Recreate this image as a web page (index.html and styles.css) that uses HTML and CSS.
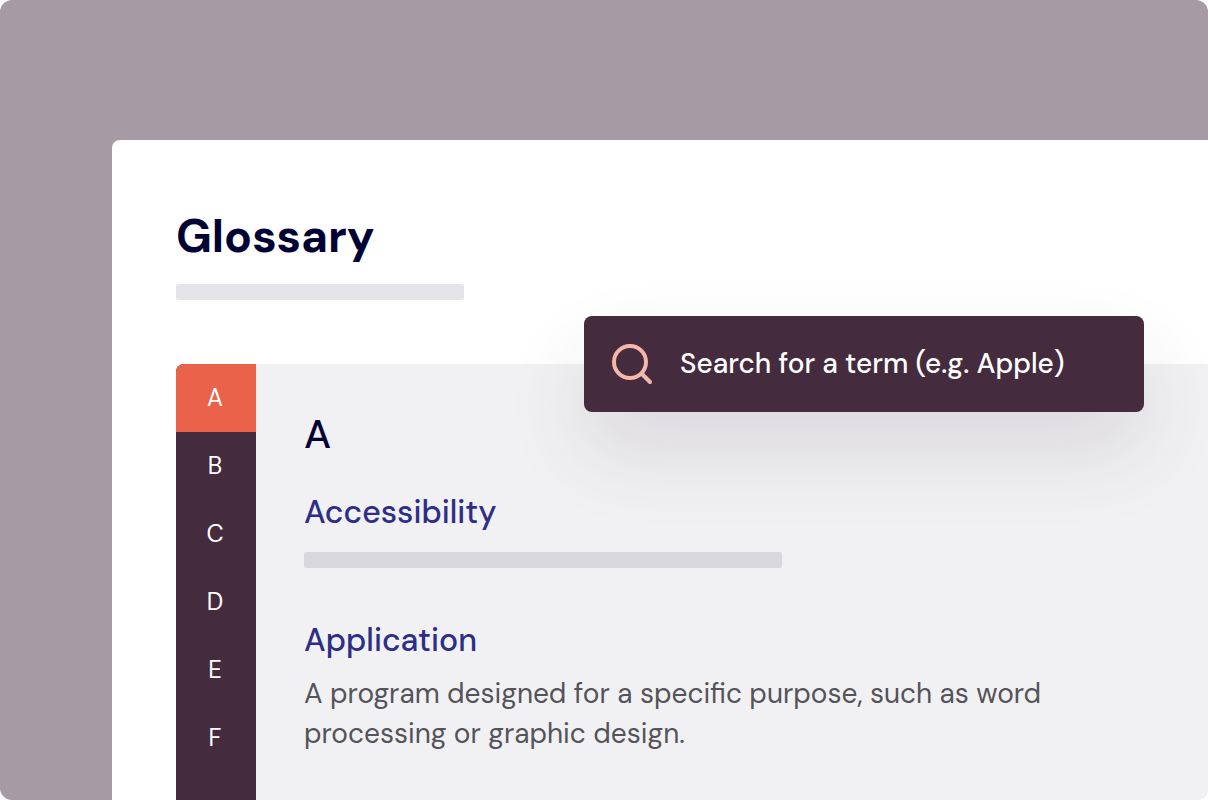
FILE: index.html
```html
<!DOCTYPE html>
<html lang="en">

<head>
    <meta charset="UTF-8">
    <meta name="viewport" content="width=device-width, initial-scale=1.0">
    <link rel="stylesheet" href="styles.css">
    <title>Glossary</title>
</head>

<body>
    <div class="page">
        <main class="sheet">
            <header class="header">
                <h1 class="title">Glossary</h1>
                <div class="bar bar-intro"></div>
            </header>

            <form class="search" role="search">
                <svg class="search-icon" viewBox="0 0 48 48" fill="none" aria-hidden="true">
                    <circle cx="22" cy="22" r="16" />
                    <path d="M34 34L42 42" />
                </svg>
                <input class="search-input" type="search" aria-label="Search for a term" placeholder="Search for a term (e.g. Apple)">
            </form>

            <div class="glossary">
                <nav class="letters">
                    <a class="letter active" href="#a">A</a>
                    <a class="letter" href="#b">B</a>
                    <a class="letter" href="#c">C</a>
                    <a class="letter" href="#d">D</a>
                    <a class="letter" href="#e">E</a>
                    <a class="letter" href="#f">F</a>
                </nav>
                <section class="terms" id="a">
                    <h2 class="terms-letter">A</h2>
                    <article class="term">
                        <h3 class="term-name">Accessibility</h3>
                        <div class="bar bar-term"></div>
                    </article>
                    <article class="term">
                        <h3 class="term-name">Application</h3>
                        <p class="term-text">A program designed for a specific purpose, such as word processing or graphic design.</p>
                    </article>
                </section>
            </div>
        </main>
    </div>
</body>

</html>
```

FILE: styles.css
```css
* {
    box-sizing: border-box;
}

body {
    margin: 0;
    background-color: #fff;
    font-family: "DM Sans", Inter, sans-serif;
}

h1, h2, h3, p {
    margin: 0;
}

.page {
    display: flex;
    height: 100vh;
    padding: 140px 0 0 112px;
    overflow: hidden;
    background-color: #a69ba4;
    border-radius: 12px;
}

.sheet {
    position: relative;
    flex: 1;
    display: flex;
    flex-direction: column;
    padding: 64px 0 0 64px;
    background-color: #fff;
    border-top-left-radius: 8px;
}

.title {
    color: #000233;
    font-size: 46px;
    font-weight: 700;
    line-height: 64px;
}

.bar {
    height: 16px;
    border-radius: 2px;
}

.bar-intro {
    width: 288px;
    margin-top: 16px;
    background-color: #e5e4e9;
}

/* floats over the header and the list */
.search {
    position: absolute;
    top: 176px;
    right: 64px;
    display: flex;
    align-items: center;
    gap: 24px;
    width: 560px;
    height: 96px;
    padding: 0 24px;
    background-color: #442b3d;
    border-radius: 8px;
    box-shadow: 0 40px 80px rgba(68, 43, 61, 0.12);
}

.search-icon {
    flex: none;
    width: 48px;
    height: 48px;
    stroke: #f4b8ab;
    stroke-width: 4;
    stroke-linecap: round;
}

.search-input {
    flex: 1;
    min-width: 0;
    padding: 0;
    border: 0;
    background: none;
    color: #fff;
    font-family: inherit;
    font-size: 28px;
    font-weight: 500;
    line-height: 40px;
}

.search-input::placeholder {
    color: #fff;
    opacity: 1;
}

.glossary {
    flex: 1;
    display: flex;
    margin-top: 64px;
    background-color: #f1f1f3;
    border-top-left-radius: 8px;
    overflow: hidden;
}

.letters {
    width: 80px;
    background-color: #442b3d;
}

.letter {
    display: block;
    padding-right: 2px;
    color: #fff;
    font-size: 24px;
    line-height: 68px;
    text-align: center;
    text-decoration: none;
}

.letter.active {
    background-color: #ea624a;
}

.terms {
    flex: 1;
    padding: 46px 48px 0;
}

.terms-letter {
    color: #000233;
    font-size: 40px;
    font-weight: 500;
    line-height: 48px;
}

.term {
    margin-top: 34px;
}

.term + .term {
    margin-top: 52px;
}

.term-name {
    color: #2d2e87;
    font-size: 32px;
    font-weight: 500;
    line-height: 40px;
}

.bar-term {
    width: 478px;
    margin-top: 20px;
    background-color: #d9d8df;
}

.term-text {
    max-width: 760px;
    margin-top: 14px;
    color: #54535a;
    font-size: 28px;
    line-height: 40px;
}
```
